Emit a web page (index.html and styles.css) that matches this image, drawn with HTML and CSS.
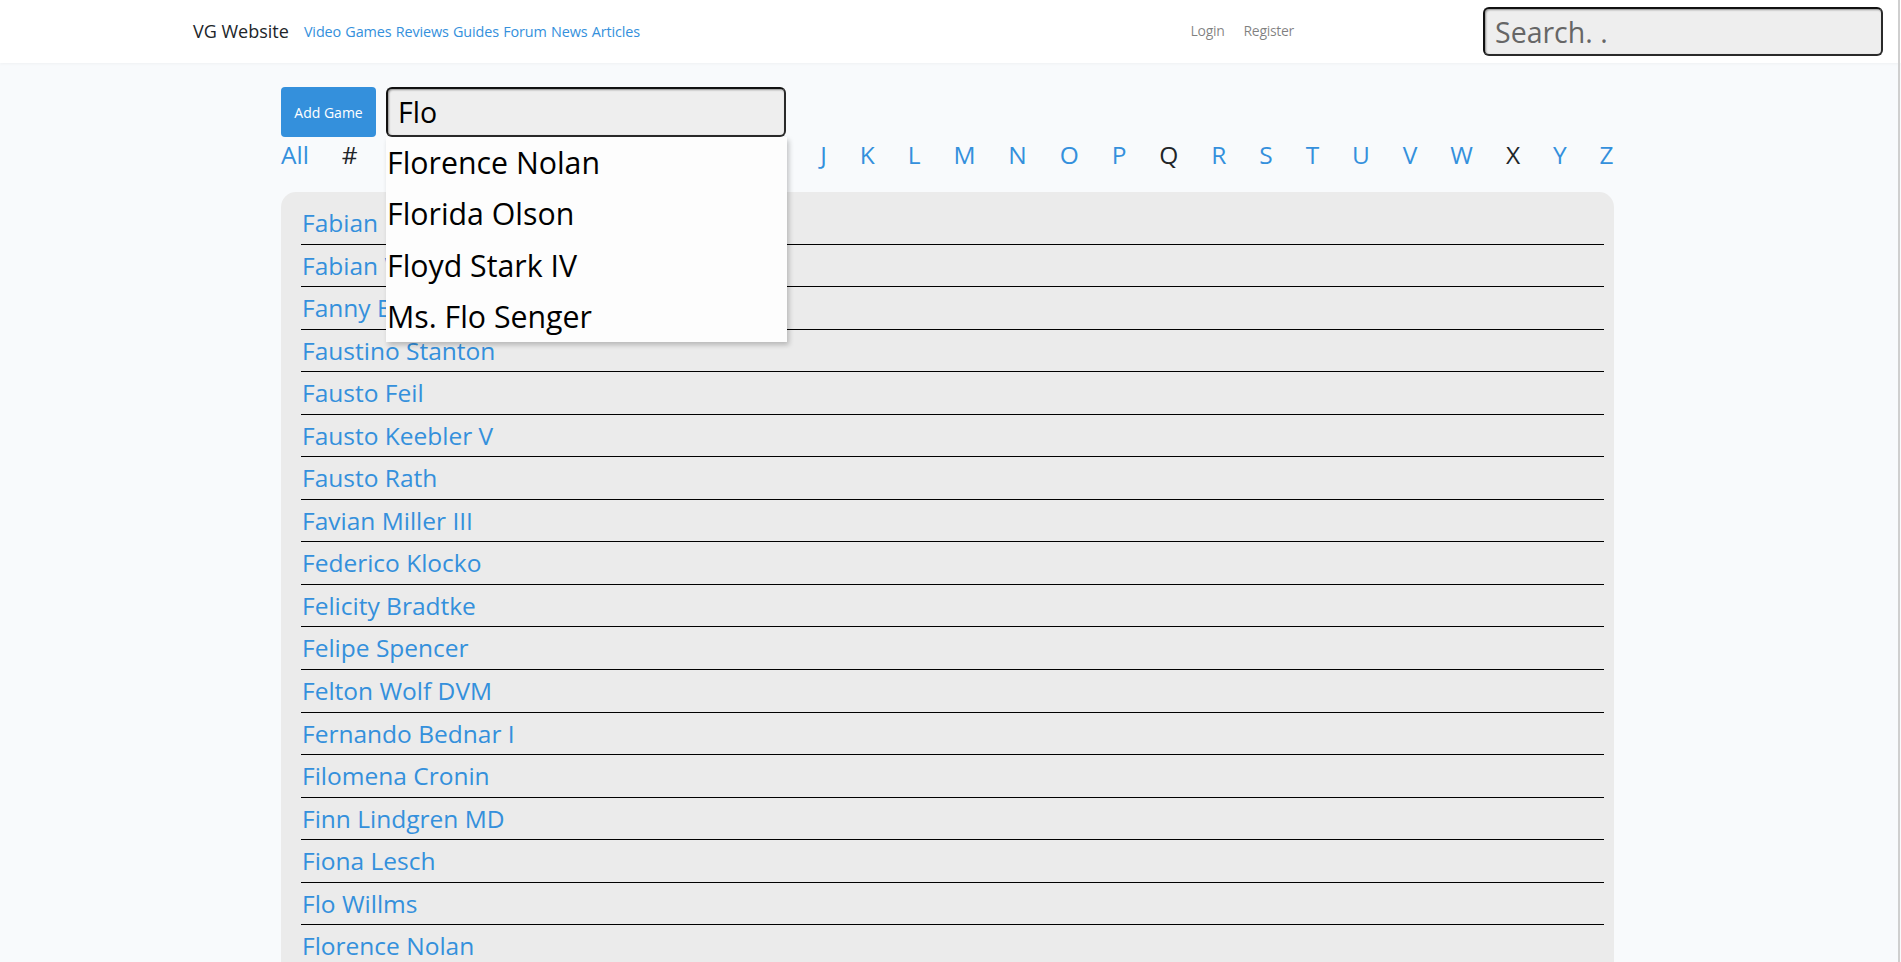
FILE: index.html
```html
<!DOCTYPE html>
<html lang="en">
<head>
<meta charset="utf-8">
<title>VG Website</title>
<link rel="stylesheet" href="styles.css">
</head>
<body>
<nav class="navbar">
  <a class="brand" href="#">VG Website</a>
  <div class="nav-links"><a href="#">Video Games</a> <a href="#">Reviews</a> <a href="#">Guides</a> <a href="#">Forum</a> <a href="#">News</a> <a href="#">Articles</a></div>
  <div class="nav-auth">
    <a class="auth-link" href="#">Login</a>
    <a class="auth-link" href="#">Register</a>
  </div>
  <input class="field search" type="text" placeholder="Search. .">
</nav>
<main class="main">
  <div class="container">
    <div class="toolbar">
      <button class="btn">Add Game</button>
      <div class="filter">
        <input class="field filter-input" type="text" value="Flo">
        <ul class="dropdown">
          <li>Florence Nolan</li>
          <li>Florida Olson</li>
          <li>Floyd Stark IV</li>
          <li>Ms. Flo Senger</li>
        </ul>
      </div>
    </div>
    <div class="letters">
      <a href="#">All</a><span>#</span><a href="#">A</a><a href="#">B</a><a href="#">C</a><a href="#">D</a><a href="#">E</a><a href="#">F</a><a href="#">G</a><a href="#">H</a><a href="#">I</a><a href="#">J</a><a href="#">K</a><a href="#">L</a><a href="#">M</a><a href="#">N</a><a href="#">O</a><a href="#">P</a><span>Q</span><a href="#">R</a><a href="#">S</a><a href="#">T</a><a href="#">U</a><a href="#">V</a><a href="#">W</a><span>X</span><a href="#">Y</a><a href="#">Z</a>
    </div>
    <div class="panel">
      <ul class="game-list">
        <li><a href="#">Fabian Kuhn</a></li>
        <li><a href="#">Fabian Wisoky</a></li>
        <li><a href="#">Fanny Bauch</a></li>
        <li><a href="#">Faustino Stanton</a></li>
        <li><a href="#">Fausto Feil</a></li>
        <li><a href="#">Fausto Keebler V</a></li>
        <li><a href="#">Fausto Rath</a></li>
        <li><a href="#">Favian Miller III</a></li>
        <li><a href="#">Federico Klocko</a></li>
        <li><a href="#">Felicity Bradtke</a></li>
        <li><a href="#">Felipe Spencer</a></li>
        <li><a href="#">Felton Wolf DVM</a></li>
        <li><a href="#">Fernando Bednar I</a></li>
        <li><a href="#">Filomena Cronin</a></li>
        <li><a href="#">Finn Lindgren MD</a></li>
        <li><a href="#">Fiona Lesch</a></li>
        <li><a href="#">Flo Willms</a></li>
        <li><a href="#">Florence Nolan</a></li>
        <li><a href="#">Florida Olson</a></li>
        <li><a href="#">Floyd Stark IV</a></li>
      </ul>
    </div>
  </div>
</main>
<div class="edge"></div>
</body>
</html>
```
FILE: styles.css
```css
html {
  overflow: hidden;
}
body {
  margin: 0;
  background: #f8fafc;
  font-family: "Open Sans", "Noto Sans", sans-serif;
  color: #212529;
  font-size: 14.4px;
  line-height: 1.6;
}
a {
  color: #3490dc;
  text-decoration: none;
}
.navbar {
  height: 63px;
  box-sizing: border-box;
  background: #fff;
  display: flex;
  align-items: center;
  padding: 0 18px 0 193px;
  box-shadow: 0 1px 3px rgba(0, 0, 0, 0.04);
}
.brand {
  color: #212529;
  font-size: 18px;
  margin-right: 15px;
}
.nav-links {
  font-size: 14.4px;
  letter-spacing: -0.1px;
  word-spacing: 0.5px;
}
.nav-auth {
  margin-left: auto;
  margin-right: 189px;
  display: flex;
  gap: 19px;
}
.auth-link {
  color: rgba(0, 0, 0, 0.5);
  font-size: 14px;
  letter-spacing: -0.3px;
}
.field {
  box-sizing: border-box;
  width: 400px;
  height: 49px;
  border: 2px solid #2a2a2a;
  border-top-color: #111;
  border-left-color: #111;
  border-radius: 6px;
  background: #eeeeee;
  box-shadow: inset 1px 1px 2px rgba(0, 0, 0, 0.4);
  padding: 0 10px;
  font-family: "Open Sans", "Noto Sans", sans-serif;
  font-size: 28.5px;
  color: #000;
  outline: none;
}
.search::placeholder {
  color: #666;
}
.main {
  padding-top: 24px;
}
.container {
  width: 1333px;
  margin-left: 281px;
}
.toolbar {
  display: flex;
  gap: 10px;
  height: 50px;
  align-items: stretch;
}
.btn {
  width: 95px;
  background: #3490dc;
  color: #fff;
  border: 0;
  border-radius: 4px;
  padding: 0;
  font-family: "Open Sans", "Noto Sans", sans-serif;
  font-size: 14px;
}
.filter {
  position: relative;
}
.filter-input {
  height: 50px;
}
.dropdown {
  position: absolute;
  top: 100%;
  left: 0;
  width: 401px;
  margin: 0;
  padding: 0;
  list-style: none;
  background: #fdfdfd;
  box-shadow: 2px 3px 5px rgba(0, 0, 0, 0.22);
  z-index: 10;
}
.dropdown li {
  font-size: 30.3px;
  line-height: 51.35px;
  color: #000;
  padding-left: 1px;
}
.letters {
  display: flex;
  justify-content: space-between;
  font-size: 24.5px;
  line-height: 36px;
  margin-bottom: 19px;
}
.letters span {
  color: #212529;
}
.panel {
  background: #ebebeb;
  border-radius: 15px;
  padding: 10px 10px 0 20px;
}
.game-list {
  margin: 0;
  padding: 0;
  list-style: none;
}
.game-list li {
  border-bottom: 1px solid #000;
  font-size: 24.5px;
  line-height: 41.55px;
  padding-left: 1px;
}
.edge {
  position: fixed;
  top: 0;
  bottom: 0;
  right: 1px;
  width: 2px;
  background: #cfcfcf;
}
```
